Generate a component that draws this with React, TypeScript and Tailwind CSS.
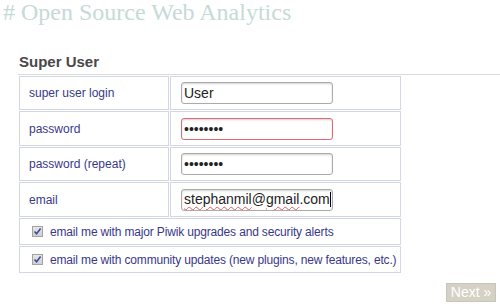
import React from 'react'

const labelCell =
  'w-[150px] shrink-0 border border-[#d3d6e3] flex items-center pl-[9px] text-[12px] text-[#383888]'
const valueCell = 'flex-1 border border-[#d3d6e3] flex items-center pl-[10px]'
const inputBox =
  'w-[152px] h-[22px] rounded-[3px] border bg-white px-[2px] text-[14px] text-[#222] shadow-[inset_0_1px_2px_rgba(0,0,0,0.18)] outline-none font-["Liberation_Sans",Arial,sans-serif]'
const checkRow =
  'h-[27px] border border-[#d3d6e3] flex items-center gap-[7px] pl-[12px] text-[12px] tracking-[-0.16px] whitespace-nowrap text-[#383888]'
const squiggle =
  'underline decoration-wavy decoration-[#e25a5a] decoration-[1px] underline-offset-[2px]'

function Check() {
  return (
    <span className="w-[11px] h-[11px] shrink-0 border border-[#a2a2a2] bg-gradient-to-b from-[#e6e6e6] to-[#d0d0d0] flex items-center justify-center">
      <svg width="9" height="9" viewBox="0 0 9 9">
        <path d="M1.5 4.5 L3.6 6.8 L7.6 1.6" fill="none" stroke="#3b4b96" strokeWidth="1.6" />
      </svg>
    </span>
  )
}

export default function App() {
  return (
    <div className="w-[500px] h-[304px] bg-white overflow-hidden font-['Liberation_Sans',Arial,sans-serif]">
      <h1 className="font-['Liberation_Serif','Times_New_Roman',serif] text-[24px] leading-[24px] text-[#c6dad7] pl-[3px]">
        # Open Source Web Analytics
      </h1>

      <div className="ml-[18px] mt-[29px]">
        <h2 className="text-[15px] leading-[18px] font-bold text-[#484848] pl-[1px] pb-[3px] border-b border-[#dadada]">
          Super User
        </h2>

        <div className="ml-[1px] mt-[1px] w-[382px] flex flex-col gap-[1px]">
          <div className="flex gap-[1px] h-[34px]">
            <div className={labelCell}>super user login</div>
            <div className={valueCell}>
              <input readOnly defaultValue="User" className={inputBox + ' border-[#ababab]'} />
            </div>
          </div>
          <div className="flex gap-[1px] h-[35px]">
            <div className={labelCell}>password</div>
            <div className={valueCell}>
              <input
                readOnly
                type="password"
                defaultValue="password"
                className={inputBox + ' border-[#dc6b76]'}
              />
            </div>
          </div>
          <div className="flex gap-[1px] h-[34px]">
            <div className={labelCell}>password (repeat)</div>
            <div className={valueCell}>
              <input
                readOnly
                type="password"
                defaultValue="password"
                className={inputBox + ' border-[#ababab]'}
              />
            </div>
          </div>
          <div className="flex gap-[1px] h-[35px]">
            <div className={labelCell}>email</div>
            <div className={valueCell}>
              <div className={inputBox + ' border-[#ababab] flex items-center overflow-hidden whitespace-nowrap'}>
                <span className={squiggle}>stephanmil</span>
                <span>@</span>
                <span className={squiggle}>gmail</span>
                <span>.com</span>
                <span className="w-[1px] h-[15px] bg-black shrink-0" />
              </div>
            </div>
          </div>
          <div className={checkRow}>
            <Check />
            <span>email me with major Piwik upgrades and security alerts</span>
          </div>
          <div className={checkRow}>
            <Check />
            <span>email me with community updates (new plugins, new features, etc.)</span>
          </div>
        </div>
      </div>

      <div className="flex justify-end pr-[4px] mt-[10px]">
        <button className="w-[50px] h-[19px] bg-[#d5d1c5] border border-[#c9c5b9] text-white text-[14px] leading-[17px]">
          Next »
        </button>
      </div>
    </div>
  )
}
